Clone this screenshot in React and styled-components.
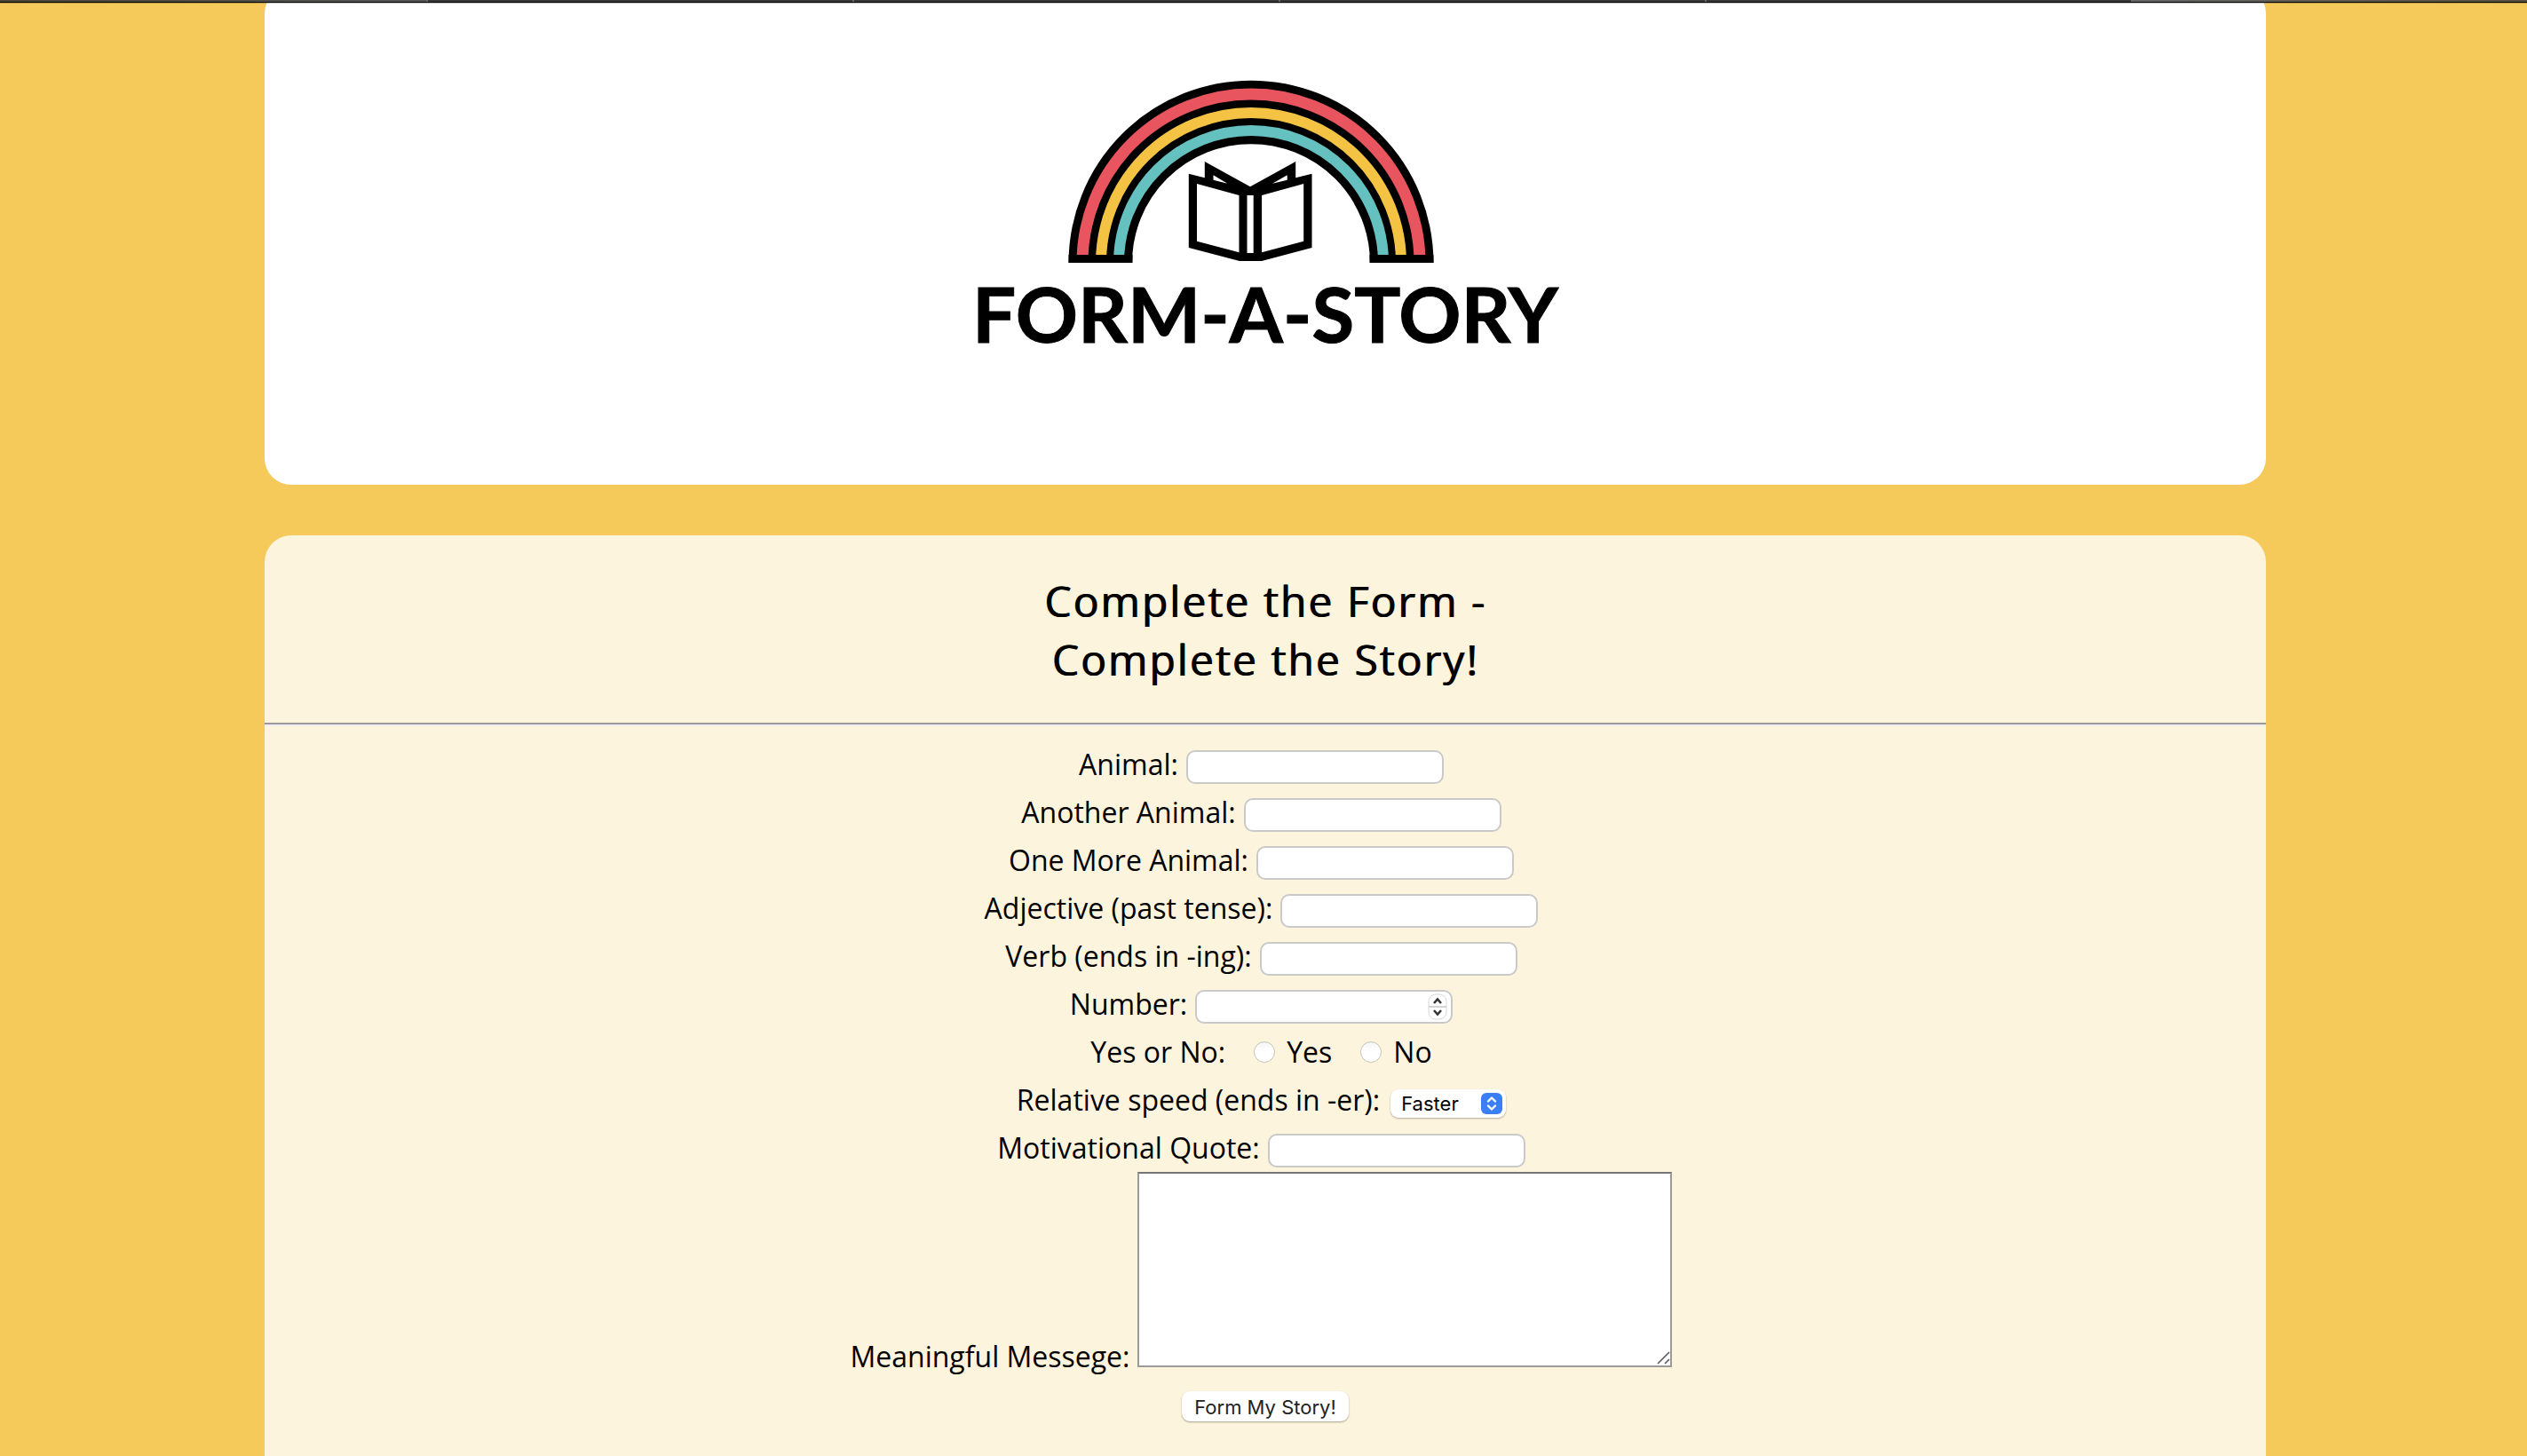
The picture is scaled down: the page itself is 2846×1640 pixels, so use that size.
import React from "react";
import styled, { createGlobalStyle } from "styled-components";

const GlobalStyle = createGlobalStyle`
  *, *::before, *::after { box-sizing: border-box; }
  body {
    margin: 0;
    background: #f5c95a;
    color: #000;
    font-family: "Open Sans", "Noto Sans", sans-serif;
    font-size: 32px;
    line-height: 54px;
    overflow-x: hidden;
  }
  #root { height: 100vh; overflow: hidden; }
`;

const TabStrip = styled.div`
  position: absolute;
  top: 0;
  left: 0;
  right: 0;
  display: grid;
  grid-template-columns: 482px repeat(4, 480px) 1fr;
  height: 4px;
  background: linear-gradient(#000 3px, rgba(0, 0, 0, 0.25) 3px);
  padding-bottom: 2px;
`;

const TabEdge = styled.span`
  background: ${(p) =>
    p.$active
      ? "linear-gradient(90deg, #666, #57503f)"
      : p.$first
      ? "linear-gradient(90deg, #4b4538, #555)"
      : "#383838"};
  border-right: 2px solid #6b6b6b;
  &:last-child { border-right: 0; }
`;

const Page = styled.div`
  display: flex;
  flex-direction: column;
  gap: 57px;
  padding: 0 294px 0 298px;
  margin-top: -15px;
`;

const Header = styled.header`
  display: flex;
  flex-direction: column;
  align-items: center;
  padding: 105px 0 139px;
  background: #fff;
  border-radius: 30px;
`;

const Emblem = styled.svg`
  display: block;
  width: 412px;
  height: 206px;
  margin-right: 32px;
`;

const Wordmark = styled.h1`
  margin: 3px 0 0;
  font-family: Lato, sans-serif;
  font-size: 87px;
  font-weight: 700;
  line-height: 108px;
  -webkit-text-stroke: 1px #000;
`;

const Card = styled.main`
  padding-bottom: 96px;
  background: #fdf4dd;
  border-radius: 30px;
`;

const Title = styled.h2`
  margin: 0;
  padding: 41px 0 38px;
  font-size: 48px;
  font-weight: 500;
  line-height: 66px;
  letter-spacing: 2px;
  text-align: center;
  text-shadow: 1px 0 0 #000;
`;

const Rule = styled.hr`
  margin: 0 0 16px;
  border: 0;
  border-top: 2px solid #9a9a9a;
  border-bottom: 2px solid #eee;
`;

const StoryForm = styled.form`
  display: flex;
  flex-direction: column;
`;

const Row = styled.div`
  display: flex;
  justify-content: center;
  align-items: baseline;
  gap: 9px;
  height: 54px;
  padding-right: 9px;
`;

const MessageRow = styled(Row)`
  height: auto;
  align-items: flex-end;
  margin-bottom: 27px;
`;

const MessageLabel = styled.label`
  line-height: 44px;
  margin-bottom: -10px;
`;

const ButtonRow = styled.div`
  display: flex;
  justify-content: center;
`;

const Field = styled.input`
  width: 290px;
  height: 38px;
  padding: 2px 8px;
  border: 2px solid #c9c9c9;
  border-radius: 10px;
  background: #fff;
  font: 26px/30px Inter, sans-serif;
  outline: 0;
  appearance: textfield;
  &::-webkit-inner-spin-button { appearance: none; margin: 0; }
`;

const NumberBox = styled.span`
  position: relative;
  display: inline-flex;
  align-items: baseline;
`;

const Stepper = styled.svg`
  position: absolute;
  right: 6px;
  top: 4px;
  width: 22px;
  height: 30px;
`;

const Choices = styled.span`
  display: flex;
  align-items: baseline;
  gap: 32px;
  margin-left: 23px;
`;

const Choice = styled.label`
  display: flex;
  align-items: baseline;
  gap: 13px;
`;

const Radio = styled.input`
  appearance: none;
  width: 24px;
  height: 24px;
  margin: 0 0 -5px;
  border: 1px solid #c8c4bb;
  border-radius: 50%;
  background: linear-gradient(#f4f4f4, #fff 40%);
  &:checked { background: #3478f6; }
`;

const SelectBox = styled.span`
  position: relative;
  display: inline-flex;
  align-items: baseline;
  margin-left: 3px;
`;

const Select = styled.select`
  appearance: none;
  width: 130px;
  height: 32px;
  padding: 0 12px;
  border: 0;
  border-radius: 9px;
  background: #fff;
  color: #000;
  box-shadow: 0 1px 2px rgba(0, 0, 0, 0.3);
  font: 22px/32px Inter, sans-serif;
`;

const SelectArrows = styled.svg`
  position: absolute;
  right: 4px;
  top: 4px;
  width: 24px;
  height: 24px;
  pointer-events: none;
`;

const Message = styled.textarea`
  display: block;
  width: 602px;
  height: 220px;
  border: 2px solid #9a9a9a;
  border-top-color: #757575;
  border-radius: 0;
  background: #fff;
  resize: none;
`;

const MessageBox = styled.span`
  position: relative;
  display: block;
`;

const Grip = styled.svg`
  position: absolute;
  right: 2px;
  bottom: 3px;
  width: 15px;
  height: 15px;
`;

const Submit = styled.button`
  width: 188px;
  height: 34px;
  padding: 2px 0 0;
  border: 0;
  border-radius: 9px;
  background: #fff;
  color: #222;
  box-shadow: 0 1px 2px rgba(0, 0, 0, 0.35);
  font: 22px/32px Inter, sans-serif;
`;

const bands = [
  { r: 190, w: 13, color: "#e8555f" },
  { r: 169, w: 12, color: "#f5c344" },
  { r: 149, w: 12, color: "#64c1bf" },
];

function Logo() {
  return (
    <Emblem viewBox="1202.5 90 412 206" aria-hidden="true">
      <path d="M1238.8 296A169.7 169.7 0 0 1 1578.2 296" fill="none" stroke="#000" strokeWidth="71.5" />
      {bands.map((b) => (
        <path
          key={b.r}
          d={`M${1408.5 - b.r} 287V296A${b.r} ${b.r} 0 0 1 ${1408.5 + b.r} 296V287`}
          fill="none"
          stroke={b.color}
          strokeWidth={b.w}
        />
      ))}
      <path d="M1203 287H1275V296H1203ZM1542 287H1614V296H1542Z" />
      <path
        fillRule="evenodd"
        d="M1338.3 195.7L1356.3 200.3V182L1407.5 210.3L1458.7 182V200.3L1477 195.7V279L1420.5 294H1395.5L1338.3 279ZM1347.5 207V271.7L1395 284.3V220ZM1404 220V285H1411.2V220ZM1420.6 220V284.3L1467.7 271.7V207ZM1366 197.3V202.7L1381.9 206.7ZM1449.2 197.3V202.7L1432.5 206.7Z"
      />
    </Emblem>
  );
}

const words = [
  ["animal1", "Animal:"],
  ["animal2", "Another Animal:"],
  ["animal3", "One More Animal:"],
  ["adjective", "Adjective (past tense):"],
  ["verb", "Verb (ends in -ing):"],
];

function TextRow({ id, label }) {
  return (
    <Row>
      <label htmlFor={id}>{label}</label>
      <Field id={id} name={id} type="text" />
    </Row>
  );
}

export default function App() {
  return (
    <>
      <GlobalStyle />
      <Page>
        <Header>
          <Logo />
          <Wordmark>FORM-A-STORY</Wordmark>
        </Header>
        <Card>
          <Title>
            Complete the Form -<br />
            Complete the Story!
          </Title>
          <Rule />
          <StoryForm onSubmit={(e) => e.preventDefault()}>
            {words.map(([id, label]) => (
              <TextRow key={id} id={id} label={label} />
            ))}
            <Row>
              <label htmlFor="number">Number:</label>
              <NumberBox>
                <Field id="number" name="number" type="number" />
                <Stepper viewBox="0 0 22 30" aria-hidden="true">
                  <rect x="1" y="1" width="20" height="28" rx="8" fill="#fff" stroke="#d9d9d9" />
                  <path d="M1 15H21" stroke="#d4d4d4" strokeWidth="2" />
                  <path d="M7 11L11 6.500L15 11M7 19L11 23.500L15 19" fill="none" stroke="#333" strokeWidth="2.500" />
                </Stepper>
              </NumberBox>
            </Row>
            <Row role="radiogroup" aria-labelledby="yesno">
              <span id="yesno">Yes or No:</span>
              <Choices>
                <Choice>
                  <Radio type="radio" name="yesno" value="yes" />
                  Yes
                </Choice>
                <Choice>
                  <Radio type="radio" name="yesno" value="no" />
                  No
                </Choice>
              </Choices>
            </Row>
            <Row>
              <label htmlFor="speed">Relative speed (ends in -er):</label>
              <SelectBox>
                <Select id="speed" name="speed" defaultValue="faster">
                  <option value="faster">Faster</option>
                </Select>
                <SelectArrows viewBox="0 0 24 24" aria-hidden="true">
                  <rect width="24" height="24" rx="6" fill="#3b7ff7" />
                  <path
                    d="M8 9.500L12 5.500L16 9.500M8 14.500L12 18.500L16 14.500"
                    fill="none"
                    stroke="#fff"
                    strokeWidth="2.400"
                    strokeLinecap="round"
                    strokeLinejoin="round"
                  />
                </SelectArrows>
              </SelectBox>
            </Row>
            <TextRow id="quote" label="Motivational Quote:" />
            <MessageRow>
              <MessageLabel htmlFor="message">Meaningful Messege:</MessageLabel>
              <MessageBox>
                <Message id="message" name="message" />
                <Grip viewBox="0 0 15 15" aria-hidden="true">
                  <path d="M1 14L14 1M9 14L14 9" stroke="#555" strokeWidth="1.500" />
                </Grip>
              </MessageBox>
            </MessageRow>
            <ButtonRow>
              <Submit type="submit">Form My Story!</Submit>
            </ButtonRow>
          </StoryForm>
        </Card>
      </Page>
      <TabStrip aria-hidden="true">
        <TabEdge $first />
        <TabEdge />
        <TabEdge />
        <TabEdge />
        <TabEdge />
        <TabEdge $active />
      </TabStrip>
    </>
  );
}
